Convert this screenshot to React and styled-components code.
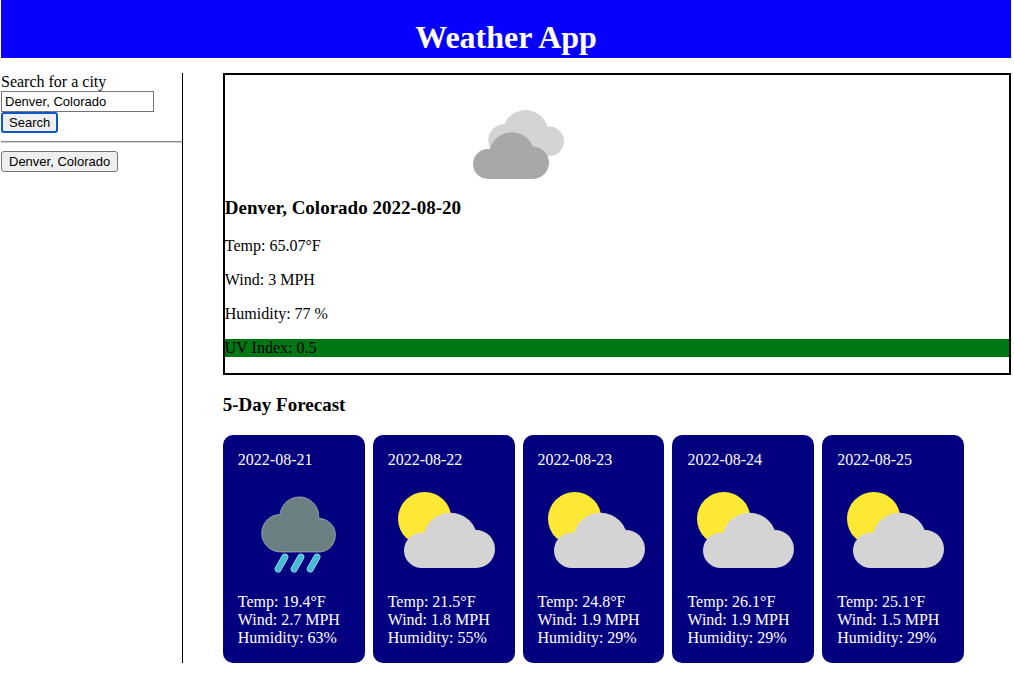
import React, { useState } from "react";
import styled, { createGlobalStyle } from "styled-components";

const GlobalStyle = createGlobalStyle`
  *, *::before, *::after { box-sizing: border-box; }
  body {
    margin: 0 3px 0 1px;
    background: #fff;
    color: #000;
    font: 16px/18px "Liberation Serif", "Times New Roman", serif;
  }
`;

const Header = styled.header`
  padding: 19px 0 3px;
  background: #0800ff;
  color: #fff;
  text-align: center;
`;

const Title = styled.h1`
  margin: 0;
  font-size: 32px;
  line-height: 36px;
`;

const Layout = styled.div`
  display: flex;
  gap: 40px;
  margin-top: 15px;
`;

const Sidebar = styled.aside`
  flex: 0 0 18%;
  border-right: 1px solid #000;
`;

const SearchForm = styled.form`
  display: flex;
  flex-direction: column;
  align-items: flex-start;
`;

const CityInput = styled.input`
  width: 153px;
  height: 21px;
  padding: 1px 3px;
  border: 1px solid #767676;
  border-radius: 0;
  background: #fff;
  color: #000;
  font: 13px "Liberation Sans", Arial, sans-serif;
`;

const Button = styled.button`
  height: 21px;
  padding: 0 ${(p) => (p.$active ? 6 : 7)}px;
  border: ${(p) => (p.$active ? "2px solid #0b57c5" : "1px solid #767676")};
  border-radius: 3px;
  background: #efefef;
  color: #000;
  font: 13px "Liberation Sans", Arial, sans-serif;
`;

const Divider = styled.hr`
  margin: 8px 0;
  border: 0;
  border-top: 1px solid #8c8c8c;
  border-bottom: 1px solid #d0d0d0;
`;

const Main = styled.main`
  flex: 1;
  min-width: 0;
`;

const Today = styled.section`
  border: 2px solid #000;
`;

const TodayIcon = styled.div`
  display: flex;
  justify-content: center;
  width: 75%;
`;

const Heading = styled.h2`
  margin: 19px 0;
  font-size: 19px;
  line-height: 21px;
`;

const Reading = styled.p`
  margin: 16px 0;
  background: ${(p) => p.$background || "transparent"};
`;

const Forecast = styled.div`
  display: flex;
  gap: 8px;
  margin-top: 20px;
`;

const Card = styled.article`
  width: 18%;
  padding: 16px 15px;
  border-radius: 10px;
  background: #03007f;
  color: #fff;
`;

const Drawing = styled.svg`
  display: block;
  overflow: visible;
`;

const Line = styled.div`
  white-space: nowrap;
`;

const CloudsIcon = () => (
  <Drawing width="100" height="103" viewBox="0 0 100 103" aria-hidden="true">
    <g fill="#d4d4d4">
      <circle cx="35.3" cy="65" r="16" />
      <circle cx="56.5" cy="57.8" r="22.8" />
      <circle cx="80.3" cy="66.3" r="14.7" />
      <path d="M35 55H80V81H35Z" />
    </g>
    <g fill="#a8a8a8">
      <circle cx="19" cy="89" r="15" />
      <circle cx="42.8" cy="80.3" r="23" />
      <circle cx="63.7" cy="87.7" r="16.3" />
      <path d="M19 80H64V104H19Z" />
    </g>
  </Drawing>
);

const PartlyCloudyIcon = () => (
  <Drawing width="112" height="124" viewBox="0 0 112 124" aria-hidden="true">
    <circle cx="36.7" cy="49.7" r="26.7" fill="#fde935" />
    <g fill="#d4d4d4">
      <circle cx="33.6" cy="81.4" r="17.6" />
      <circle cx="62.4" cy="70.7" r="27" />
      <circle cx="88" cy="80" r="19" />
      <path d="M33 72H88V99H33Z" />
    </g>
  </Drawing>
);

const RainIcon = () => (
  <Drawing width="112" height="124" viewBox="0 0 112 124" aria-hidden="true">
    <path
      d="M43 83A18.8 18.8 0 0 1 42 45.4A19.4 19.4 0 1 1 80.7 49.3A16.9 16.9 0 0 1 82.4 83Z"
      fill="#6c8083"
      stroke="#c3cccd"
      strokeWidth="0.6"
    />
    <g strokeLinecap="round">
      <path d="M46.9 88L40.1 100M62.9 88L56.1 100M79 88L72.2 100" stroke="#d8f1f5" strokeWidth="6.8" />
      <path d="M46.9 88L40.1 100M62.9 88L56.1 100M79 88L72.2 100" stroke="#45bdd5" strokeWidth="5.8" />
    </g>
  </Drawing>
);

const days = [
  { date: "2022-08-21", Icon: RainIcon, temp: "19.4", wind: "2.7", humidity: 63 },
  { date: "2022-08-22", Icon: PartlyCloudyIcon, temp: "21.5", wind: "1.8", humidity: 55 },
  { date: "2022-08-23", Icon: PartlyCloudyIcon, temp: "24.8", wind: "1.9", humidity: 29 },
  { date: "2022-08-24", Icon: PartlyCloudyIcon, temp: "26.1", wind: "1.9", humidity: 29 },
  { date: "2022-08-25", Icon: PartlyCloudyIcon, temp: "25.1", wind: "1.5", humidity: 29 },
];

export default function App() {
  const [city, setCity] = useState("Denver, Colorado");

  return (
    <>
      <GlobalStyle />
      <Header>
        <Title>Weather App</Title>
      </Header>
      <Layout>
        <Sidebar>
          <SearchForm onSubmit={(e) => e.preventDefault()}>
            <label htmlFor="city">Search for a city</label>
            <CityInput id="city" type="text" value={city} onChange={(e) => setCity(e.target.value)} />
            <Button type="submit" $active>Search</Button>
          </SearchForm>
          <Divider />
          <Button type="button" onClick={() => setCity("Denver, Colorado")}>Denver, Colorado</Button>
        </Sidebar>
        <Main>
          <Today>
            <TodayIcon>
              <CloudsIcon />
            </TodayIcon>
            <Heading>Denver, Colorado 2022-08-20</Heading>
            <Reading>Temp: 65.07°F</Reading>
            <Reading>Wind: 3 MPH</Reading>
            <Reading>Humidity: 77 %</Reading>
            <Reading $background="#007615">UV Index: 0.5</Reading>
          </Today>
          <Heading>5-Day Forecast</Heading>
          <Forecast>
            {days.map(({ date, Icon, temp, wind, humidity }) => (
              <Card key={date}>
                <Line>{date}</Line>
                <Icon />
                <Line>Temp: {temp}°F</Line>
                <Line>Wind: {wind} MPH</Line>
                <Line>Humidity: {humidity}%</Line>
              </Card>
            ))}
          </Forecast>
        </Main>
      </Layout>
    </>
  );
}
